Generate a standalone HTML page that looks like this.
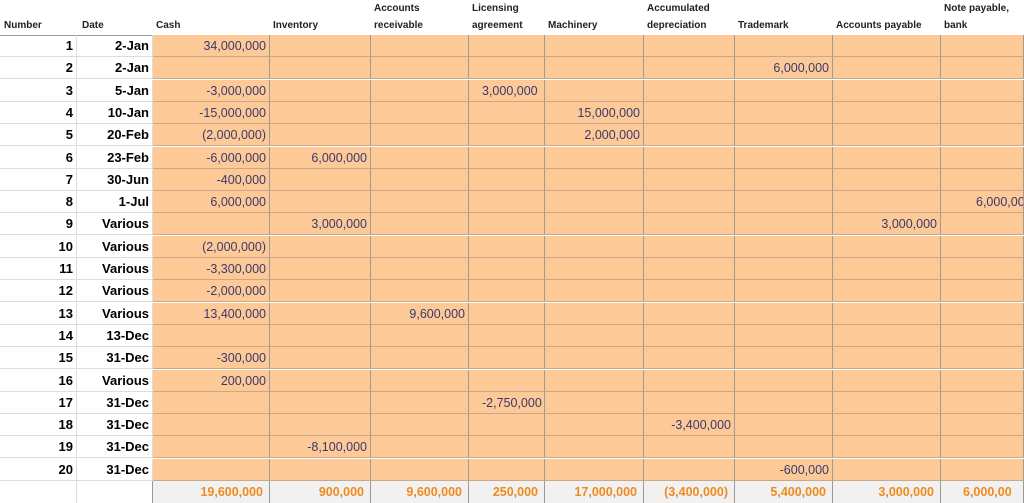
<html><head><style>
body{margin:0;width:1024px;height:503px;overflow:hidden;background:#fff;font-family:"Liberation Sans",sans-serif;position:relative}
.h{position:absolute;font-size:10px;font-weight:bold;color:#222;line-height:17px}
.c{position:absolute;height:22px;line-height:22px;font-size:12.5px;text-align:right;color:#3a3a6e;box-sizing:border-box;padding-right:3px;white-space:nowrap;overflow:hidden}
.o{background:#fdc997;border-right:1px solid #a09a96;border-bottom:1px solid #c8a88a}
.w{border-right:1px solid #ddd;border-bottom:1px solid #ddd;color:#000;font-weight:bold;font-size:13px}
.t{background:#f1f1f1;color:#f08a1d;font-weight:bold;border-right:1px solid #999}
</style></head><body>
<div style="position:absolute;left:0;top:0;width:1024px;height:35px;border-bottom:1px solid #999"></div>
<div class="h" style="left:4px;top:17px">Number</div>
<div class="h" style="left:82px;top:17px">Date</div>
<div class="h" style="left:156px;top:17px">Cash</div>
<div class="h" style="left:273px;top:17px">Inventory</div>
<div class="h" style="left:374px;top:0">Accounts<br>receivable</div>
<div class="h" style="left:472px;top:0">Licensing<br>agreement</div>
<div class="h" style="left:548px;top:17px">Machinery</div>
<div class="h" style="left:647px;top:0">Accumulated<br>depreciation</div>
<div class="h" style="left:738px;top:17px">Trademark</div>
<div class="h" style="left:836px;top:17px">Accounts payable</div>
<div class="h" style="left:944px;top:0">Note payable,<br>bank</div>
<div id="g"></div>
<script>
var L=[0,77,153,270,371,469,545,644,735,833,941,1024];
var dates=["2-Jan","2-Jan","5-Jan","10-Jan","20-Feb","23-Feb","30-Jun","1-Jul","Various","Various","Various","Various","Various","13-Dec","31-Dec","Various","31-Dec","31-Dec","31-Dec","31-Dec"];
var v={1:{2:"34,000,000"},2:{8:"6,000,000"},3:{2:"-3,000,000",5:"3,000,000"},4:{2:"-15,000,000",6:"15,000,000"},5:{2:"(2,000,000)",6:"2,000,000"},6:{2:"-6,000,000",3:"6,000,000"},7:{2:"-400,000"},8:{2:"6,000,000",10:"6,000,00"},9:{3:"3,000,000",9:"3,000,000"},10:{2:"(2,000,000)"},11:{2:"-3,300,000"},12:{2:"-2,000,000"},13:{2:"13,400,000",4:"9,600,000"},14:{},15:{2:"-300,000"},16:{2:"200,000"},17:{5:"-2,750,000"},18:{7:"-3,400,000"},19:{3:"-8,100,000"},20:{8:"-600,000"}};
var tot=["19,600,000","900,000","9,600,000","250,000","17,000,000","(3,400,000)","5,400,000","3,000,000","6,000,00"];
var h="";
for(var r=1;r<=20;r++){var y=35+(r-1)*22.3;
for(var c=0;c<11;c++){var cls=c<2?"w":"o";var txt=c==0?r:c==1?dates[r-1]:(v[r][c]||"");
var st=c==10&&txt?"text-align:left;padding-left:35px;":"";
if(c==5&&txt)st="text-align:left;padding-left:13px;";
h+='<div class="c '+cls+'" style="left:'+L[c]+'px;top:'+y+'px;width:'+(L[c+1]-L[c])+'px;'+st+'">'+txt+'</div>';}}
h+='<div class="c" style="left:0;top:481px;width:77px;border-right:1px solid #ddd"></div><div class="c" style="left:77px;top:481px;width:76px;border-right:1px solid #999"></div>';
for(var c=2;c<11;c++){var st=c==10?"text-align:left;padding-left:22px;":"padding-right:6px;";h+='<div class="c t" style="left:'+L[c]+'px;top:481px;width:'+(L[c+1]-L[c])+'px;'+st+'">'+tot[c-2]+'</div>';}
document.getElementById("g").innerHTML=h;
</script>
</body></html>
